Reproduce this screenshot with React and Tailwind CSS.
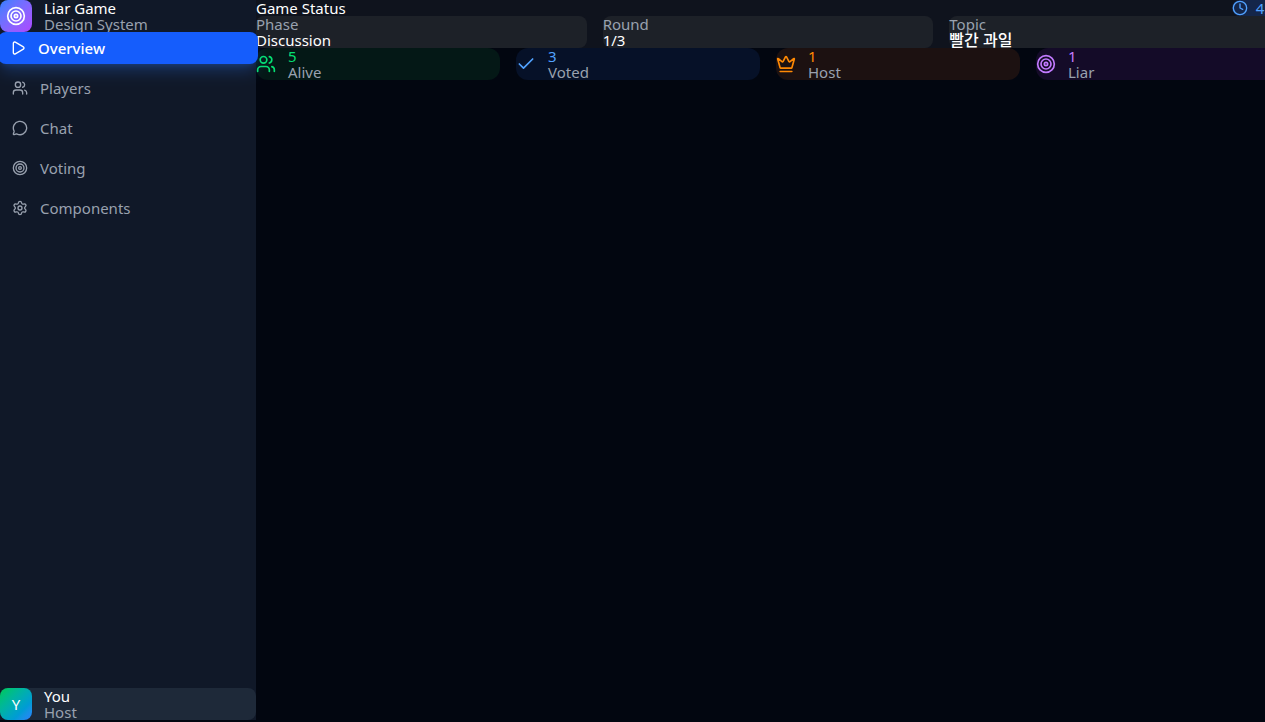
import { Check, Clock, Crown, MessageCircle, Play, Settings, Target, Users } from "lucide-react";

const navItems = [
  { label: "Overview", icon: Play, active: true },
  { label: "Players", icon: Users },
  { label: "Chat", icon: MessageCircle },
  { label: "Voting", icon: Target },
  { label: "Components", icon: Settings },
];

const statusCards = [
  { label: "Phase", value: "Discussion" },
  { label: "Round", value: "1/3" },
  { label: "Topic", value: "빨간 과일", korean: true },
];

const stats = [
  { label: "Alive", value: 5, icon: Users, tint: "bg-[#041816]", color: "text-[#05df72]" },
  { label: "Voted", value: 3, icon: Check, tint: "bg-[#061128]", color: "text-[#51a2ff]" },
  { label: "Host", value: 1, icon: Crown, tint: "bg-[#1c1111]", color: "text-[#ff8904]" },
  { label: "Liar", value: 1, icon: Target, tint: "bg-[#140b28]", color: "text-[#c27aff]" },
];

function NavItem({ label, icon: Icon, active }) {
  return (
    <button
      type="button"
      aria-current={active ? "page" : undefined}
      className={
        active
          ? "-mx-0.5 flex h-8 items-center gap-3 rounded-lg bg-[#155dfc] px-3 font-medium text-white shadow-lg shadow-blue-500/25"
          : "flex h-8 items-center gap-3 rounded-lg px-3 text-[#99a1af]"
      }
    >
      <Icon className="size-4 shrink-0" />
      <span>{label}</span>
    </button>
  );
}

function Sidebar() {
  return (
    <aside className="relative z-10 flex w-64 shrink-0 flex-col bg-[#101828]">
      <div className="flex items-center gap-3">
        <div className="flex size-8 items-center justify-center rounded-lg bg-linear-to-br from-[#2b7fff] to-[#ad46ff] text-white">
          <Target className="size-5" />
        </div>
        <div>
          <h1 className="text-white">Liar Game</h1>
          <p className="text-[#99a1af]">Design System</p>
        </div>
      </div>
      <nav className="flex flex-1 flex-col gap-2">
        {navItems.map((item) => (
          <NavItem key={item.label} {...item} />
        ))}
      </nav>
      <div className="flex items-center gap-3 rounded-lg bg-[#1e2939]">
        <div className="flex size-8 items-center justify-center rounded-lg bg-linear-to-br from-[#00c950] to-[#2b7fff] text-white">
          Y
        </div>
        <div>
          <p className="text-white">You</p>
          <p className="text-[#99a1af]">Host</p>
        </div>
      </div>
    </aside>
  );
}

export default function App() {
  return (
    <div className="flex min-h-screen overflow-hidden bg-[#020610] pb-0.5 font-['Noto_Sans','Noto_Sans_CJK_KR',sans-serif] text-[15px] leading-4">
      <Sidebar />
      <main className="min-w-5xl flex-1">
        <section className="bg-[#0f131d]">
          <div className="flex items-center justify-between">
            <h2 className="text-white">Game Status</h2>
            <div className="flex items-center gap-2 rounded-full bg-[#14264a] text-[#51a2ff]">
              <Clock className="size-4" />
              <span>45s</span>
            </div>
          </div>
          <div className="grid grid-cols-3 gap-4">
            {statusCards.map((card) => (
              <div key={card.label} className="rounded-lg bg-[#1d2128]">
                <p className="text-[#99a1af]">{card.label}</p>
                <p className={card.korean ? "text-base/4 font-medium text-white" : "text-white"}>{card.value}</p>
              </div>
            ))}
          </div>
        </section>
        <section className="grid grid-cols-4 gap-4">
          {stats.map(({ label, value, icon: Icon, tint, color }) => (
            <div key={label} className={`flex items-center gap-3 rounded-xl ${tint}`}>
              <Icon className={`size-5 shrink-0 ${color}`} />
              <div>
                <p className={color}>{value}</p>
                <p className="text-[#99a1af]">{label}</p>
              </div>
            </div>
          ))}
        </section>
      </main>
    </div>
  );
}
